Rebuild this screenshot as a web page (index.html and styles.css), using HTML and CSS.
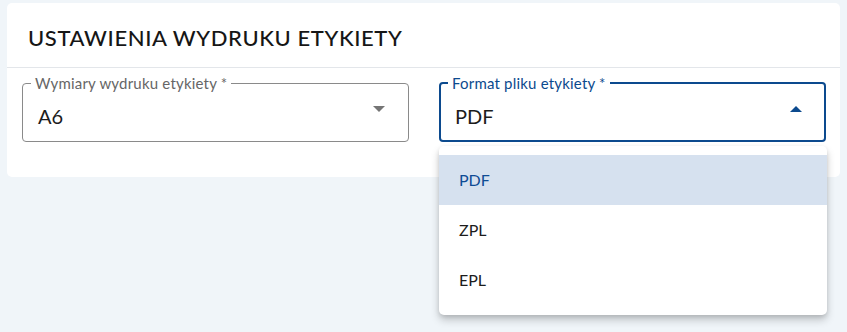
FILE: index.html
```html
<!DOCTYPE html>
<html lang="pl">
<head>
    <meta charset="UTF-8">
    <title>Ustawienia wydruku etykiety</title>
    <link rel="stylesheet" href="styles.css">
</head>
<body>
    <div class="card">
        <h2 class="card-title">USTAWIENIA WYDRUKU ETYKIETY</h2>
        <div class="card-body">
            <div class="field">
                <fieldset class="outline">
                    <legend>Wymiary wydruku etykiety *</legend>
                </fieldset>
                <span class="value">A6</span>
                <span class="arrow"></span>
            </div>
            <div class="field focused">
                <fieldset class="outline">
                    <legend>Format pliku etykiety *</legend>
                </fieldset>
                <span class="value">PDF</span>
                <span class="arrow up"></span>
                <ul class="menu">
                    <li class="selected">PDF</li>
                    <li>ZPL</li>
                    <li>EPL</li>
                </ul>
            </div>
        </div>
    </div>
</body>
</html>
```

FILE: styles.css
```css
html {
    height: 100%;
}
body {
    margin: 0;
    padding: 3px 7px;
    min-height: 100%;
    box-sizing: border-box;
    background: #f0f5f9;
    font-family: Lato, Inter, sans-serif;
    color: #1c1c1c;
}
.card {
    background: white;
    border-radius: 5px;
    height: 174px;
}
.card-title {
    margin: 0;
    padding: 20px 21px 0;
    box-sizing: border-box;
    height: 65px;
    font-size: 22px;
    line-height: 30px;
    font-weight: 500;
    letter-spacing: 0.6px;
    color: #161616;
    border-bottom: 1px solid #e3e6ea;
}
.card-body {
    display: flex;
    gap: 30px;
    padding: 15px 14px 0 15px;
}
.field {
    position: relative;
    width: 387px;
    height: 59px;
    display: flex;
    align-items: center;
    padding: 6px 16px 0;
    box-sizing: border-box;
}
.outline {
    position: absolute;
    inset: -7px 0 0 0;
    margin: 0;
    padding: 0 8px;
    border: 1px solid #8a8a8a;
    border-radius: 4px;
    pointer-events: none;
}
.outline legend {
    padding: 0 4px;
    font-size: 15px;
    line-height: 14px;
    letter-spacing: 0.2px;
    color: #666;
}
.focused .outline {
    border: 2px solid #0c4a8e;
    padding: 0 7px;
}
.focused .outline legend {
    color: #0c4a8e;
}
.value {
    flex: 1;
    font-size: 20px;
}
.arrow {
    width: 0;
    height: 0;
    margin-right: 8px;
    border-left: 6px solid transparent;
    border-right: 6px solid transparent;
    border-top: 6px solid #757575;
    margin-top: -14px;
}
.arrow.up {
    border-top: none;
    border-bottom: 6px solid #0c4a8e;
}
.menu {
    position: absolute;
    top: 63px;
    left: 0;
    z-index: 2;
    width: 388px;
    margin: 0;
    padding: 9px 0 10px;
    list-style: none;
    background: white;
    border-radius: 5px;
    box-shadow: 0 5px 8px rgba(0,0,0,0.2), 0 2px 4px rgba(0,0,0,0.1);
}
.menu li {
    height: 50px;
    line-height: 50px;
    padding-left: 20px;
    font-size: 16px;
}
.menu li.selected {
    background: #d6e1ef;
    color: #0f4c95;
}
```
